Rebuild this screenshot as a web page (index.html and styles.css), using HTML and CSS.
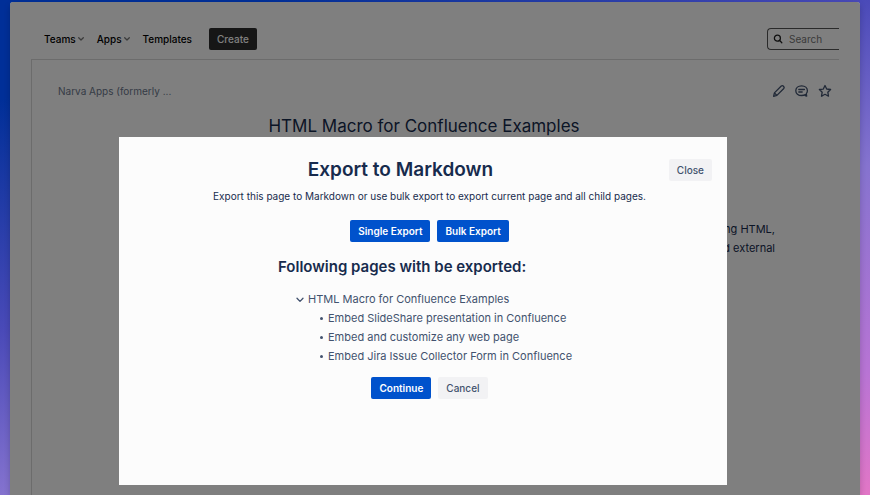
FILE: index.html
```html
<!DOCTYPE html>
<html lang="en">
<head>
    <meta charset="UTF-8">
    <meta name="viewport" content="width=device-width, initial-scale=1.0">
    <title>Export to Markdown</title>
    <link rel="stylesheet" href="styles.css">
</head>
<body>
    <div class="window">
        <header class="navbar">
            <nav class="nav-links">
                <a href="#">Teams
                    <svg class="chevron" width="6" height="4" viewBox="0 0 6 4"><path d="M0.7 0.7 L3 3 L5.3 0.7"/></svg>
                </a>
                <a href="#">Apps
                    <svg class="chevron" width="6" height="4" viewBox="0 0 6 4"><path d="M0.7 0.7 L3 3 L5.3 0.7"/></svg>
                </a>
                <a href="#">Templates</a>
            </nav>
            <button type="button" class="btn create-btn">Create</button>
            <div class="search">
                <svg width="10" height="10" viewBox="0 0 10 10"><circle cx="4.4" cy="4.2" r="3"/><path d="M6.6 6.4 L8.8 8.7"/></svg>
                <input type="text" placeholder="Search" aria-label="Search">
            </div>
        </header>

        <main class="page">
            <div class="page-bar">
                <a href="#" class="breadcrumb">Narva Apps (formerly ...</a>
                <div class="page-actions">
                    <button type="button" aria-label="Edit">
                        <svg width="14" height="14" viewBox="0 0 14 14"><path d="M1.6 12.4 L2.4 8.9 L9.3 2 Q10.4 1.1 11.5 2.2 Q12.7 3.4 11.8 4.5 L4.9 11.4 Z M2.5 9 L4.9 11.4"/></svg>
                    </button>
                    <button type="button" aria-label="Comments">
                        <svg width="14" height="14" viewBox="0 0 14 14"><path d="M10.4 10.6 Q8.9 11.5 6.6 11.5 C3.1 11.5 0.8 9.5 0.8 6.7 C0.8 3.8 3.1 1.8 6.6 1.8 C10.1 1.8 12.4 3.8 12.4 6.7 Q12.4 8.4 11.3 9.6 L11.7 12.2 L10.2 11.6 M3.8 5.5 H9.4 M3.8 8 H7.2"/></svg>
                    </button>
                    <button type="button" aria-label="Star">
                        <svg width="14" height="14" viewBox="0 0 14 14"><path d="M7 1.5 L8.7 5 L12.6 5.5 L9.8 8.2 L10.5 12.2 L7 10.3 L3.5 12.2 L4.2 8.2 L1.4 5.5 L5.3 5 Z"/></svg>
                    </button>
                </div>
            </div>
            <article class="article">
                <h1>HTML Macro for Confluence Examples</h1>
                <p>using HTML,<br>and external</p>
            </article>
        </main>

        <div class="overlay">
            <div class="dialog" role="dialog" aria-labelledby="dialog-title">
                <div class="dialog-header">
                    <h2 id="dialog-title">Export to Markdown</h2>
                    <button type="button" class="btn btn-subtle">Close</button>
                </div>
                <div class="dialog-body">
                    <p>Export this page to Markdown or use bulk export to export current page and all child pages.</p>
                    <div class="btn-row">
                        <button type="button" class="btn btn-primary">Single Export</button>
                        <button type="button" class="btn btn-primary">Bulk Export</button>
                    </div>
                    <section class="export-list">
                        <h3>Following pages with be exported:</h3>
                        <details open>
                            <summary>
                                <svg width="8" height="6" viewBox="0 0 8 6"><path d="M1 1.2 L4 4.4 L7 1.2"/></svg>
                                HTML Macro for Confluence Examples
                            </summary>
                            <ul>
                                <li>Embed SlideShare presentation in Confluence</li>
                                <li>Embed and customize any web page</li>
                                <li>Embed Jira Issue Collector Form in Confluence</li>
                            </ul>
                        </details>
                    </section>
                    <div class="btn-row">
                        <button type="button" class="btn btn-primary">Continue</button>
                        <button type="button" class="btn btn-subtle">Cancel</button>
                    </div>
                </div>
            </div>
        </div>
    </div>
</body>
</html>
```
FILE: styles.css
```css
* {
    box-sizing: border-box;
}

body {
    margin: 0;
    min-height: 100vh;
    padding: 2px 10px 0;
    display: flex;
    font-family: Inter, "Liberation Sans", sans-serif;
    font-size: 10px;
    color: #172b4d;
    background: linear-gradient(159deg, #002f98 0%, #002f98 12%, #4a4ab8 40%, #8573cf 60%, #b874d4 85%, #e276c6 100%);
}

h1,
h2,
h3,
p,
ul {
    margin: 0;
    padding: 0;
}

a {
    color: inherit;
    text-decoration: none;
}

button,
input {
    font: inherit;
    color: inherit;
    border: none;
    padding: 0;
    background: none;
}

svg {
    fill: none;
    stroke: currentColor;
    stroke-width: 1.3;
    stroke-linecap: round;
    stroke-linejoin: round;
    flex-shrink: 0;
}

.window {
    position: relative;
    flex: 1;
    display: flex;
    flex-direction: column;
    padding: 18px 21px 0;
    background: #fff;
    border-radius: 3px 3px 0 0;
    overflow: hidden;
    box-shadow: 0 3px 6px rgba(0, 0, 0, 0.2);
}

/* Top navigation */
.navbar {
    display: flex;
    align-items: center;
    height: 39px;
    padding: 0 0 1px 13px;
}

.nav-links {
    display: flex;
    gap: 13px;
    margin-right: 17px;
    font-weight: 500;
    color: #000;
}

.nav-links a {
    display: flex;
    align-items: center;
    gap: 2px;
}

.chevron {
    color: #777;
}

.btn {
    height: 22px;
    padding: 0 8px;
    border-radius: 2px;
    font-weight: 500;
    white-space: nowrap;
}

.create-btn {
    background: #2c2c2c;
    color: #fff;
}

.search {
    display: flex;
    align-items: center;
    gap: 6px;
    width: 72px;
    height: 22px;
    margin-left: auto;
    padding-left: 5px;
    border: 1px solid #555;
    border-right: none;
    border-radius: 4px 0 0 4px;
    color: #222;
}

.search input {
    width: 100%;
    min-width: 0;
}

.search input::placeholder {
    color: #757575;
}

/* Page content */
.page {
    flex: 1;
    padding: 24px 7px 0 26px;
    border-top: 1px solid #d8d8d8;
    border-left: 1px solid #d8d8d8;
}

.page-bar {
    display: flex;
    align-items: center;
    justify-content: space-between;
    height: 14px;
    color: #6b778c;
}

.page-actions {
    display: flex;
    gap: 9px;
    color: #42526e;
}

.page-actions button {
    height: 14px;
}

.page-actions svg {
    display: block;
}

.article {
    padding: 16px 57px 0 15px;
}

.article h1 {
    font-size: 17px;
    line-height: 24px;
    font-weight: 400;
    text-align: center;
}

.article p {
    margin-top: 82px;
    font-size: 11px;
    line-height: 19px;
    text-align: right;
}

/* Export dialog */
.overlay {
    position: absolute;
    inset: 0;
    display: flex;
    justify-content: center;
    align-items: flex-end;
    padding: 0 24px 10px 0;
    background: rgba(0, 0, 0, 0.5);
}

.dialog {
    width: 100%;
    max-width: 608px;
    min-height: 348px;
    padding: 20px 15px 0 13px;
    background: #fcfcfc;
}

.dialog-header {
    display: flex;
    align-items: center;
}

.dialog-header h2 {
    flex: 1;
    font-size: 19px;
    line-height: 26px;
    font-weight: 600;
    text-align: center;
}

.dialog-body {
    padding-left: 15px;
}

.dialog-body p {
    margin: 6px 0 17px;
    line-height: 14px;
    text-align: center;
}

.btn-row {
    display: flex;
    justify-content: center;
    gap: 7px;
}

.btn-primary {
    background: #0052cc;
    color: #fff;
    font-weight: 600;
}

.btn-subtle {
    background: #f2f2f4;
    color: #42526e;
}

.export-list {
    max-width: 303px;
    margin: 15px auto 11px;
    color: #42526e;
}

.export-list h3 {
    margin-bottom: 13px;
    font-size: 15px;
    line-height: 20px;
    font-weight: 600;
    color: #172b4d;
}

.export-list details {
    padding-left: 18px;
    font-size: 11px;
    line-height: 19px;
}

.export-list summary {
    display: flex;
    align-items: center;
    gap: 4px;
    list-style: none;
}

.export-list ul {
    padding-left: 24px;
    list-style: none;
}

.export-list li {
    display: flex;
    align-items: center;
    gap: 5px;
}

.export-list li::before {
    content: "";
    width: 3px;
    height: 3px;
    border-radius: 50%;
    background: currentColor;
}
```
